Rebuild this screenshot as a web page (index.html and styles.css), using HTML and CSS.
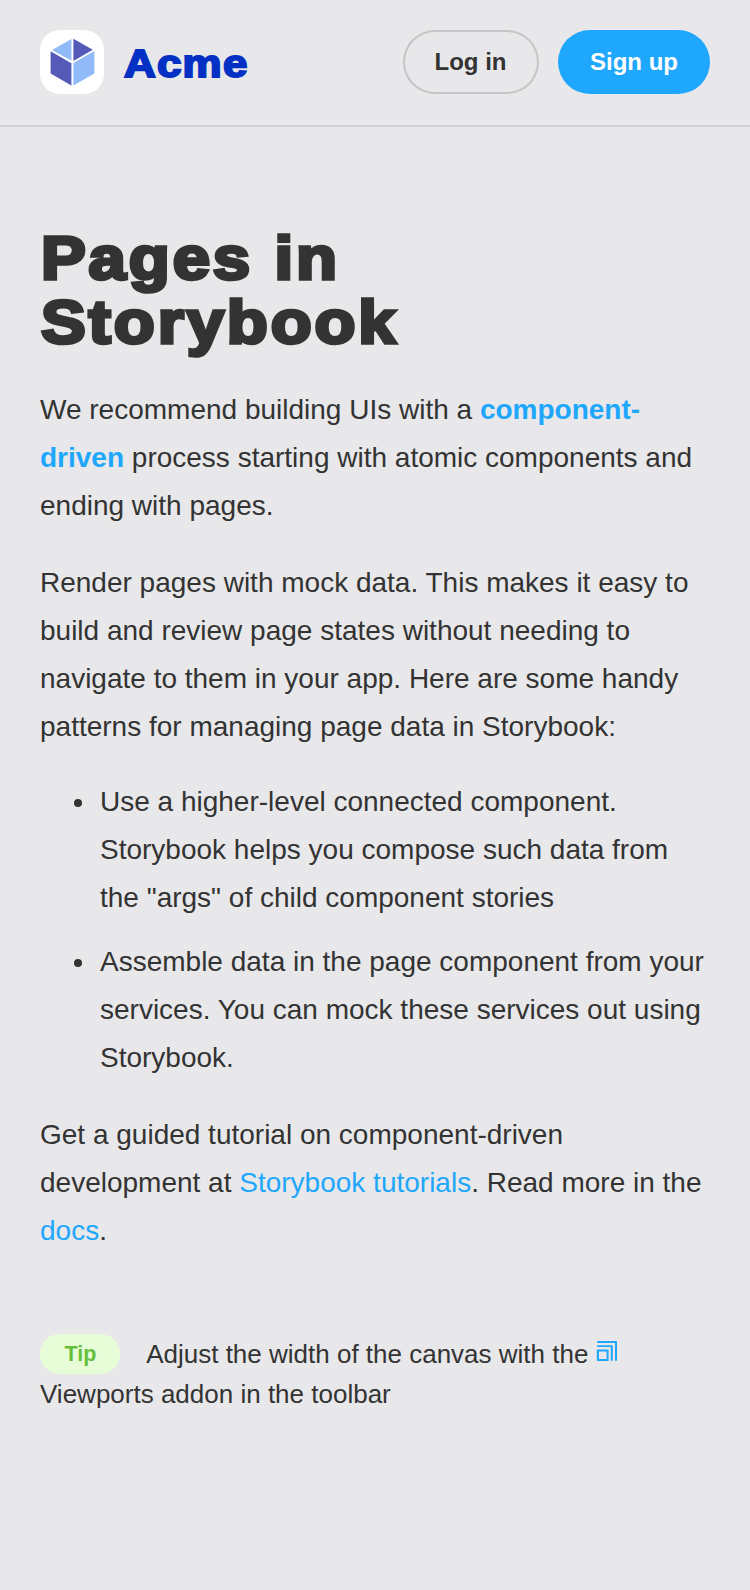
FILE: index.html
```html
<!DOCTYPE html>
<html lang="en">
<head>
<meta charset="utf-8">
<title>Acme</title>
<link rel="stylesheet" href="styles.css">
</head>
<body>
<header class="header">
  <div class="brand">
    <svg class="logo" viewBox="0 0 32 32"><g fill="none" fill-rule="evenodd"><path d="M10 0h12a10 10 0 0110 10v12a10 10 0 01-10 10H10A10 10 0 010 22V10A10 10 0 0110 0z" fill="#FFF"/><path d="M5.3 10.6l10.4 6v11.1l-10.4-6v-11zm11.4-6.2l9.7 5.5-9.7 5.6V4.4z" fill="#555AB9"/><path d="M27.2 10.6v11.2l-10.5 6V16.5l10.5-6zM15.7 4.4v11L6 10l9.7-5.5z" fill="#91BAF8"/></g></svg>
    <span class="brand-name">Acme</span>
  </div>
  <div class="actions">
    <button class="button button-secondary">Log in</button>
    <button class="button button-primary">Sign up</button>
  </div>
</header>
<main class="page">
  <h1 class="title">Pages in Storybook</h1>
  <p class="text">We recommend building UIs with a <a class="link strong">component-driven</a> process starting with atomic components and ending with pages.</p>
  <p class="text">Render pages with mock data. This makes it easy to build and review page states without needing to navigate to them in your app. Here are some handy patterns for managing page data in Storybook:</p>
  <ul class="list">
    <li class="item">Use a higher-level connected component. Storybook helps you compose such data from the "args" of child component stories</li>
    <li class="item">Assemble data in the page component from your services. You can mock these services out using Storybook.</li>
  </ul>
  <p class="text">Get a guided tutorial on component-driven development at <a class="link">Storybook tutorials</a>. Read more in the <a class="link">docs</a>.</p>
  <div class="tip-row"><span class="tip">Tip</span> Adjust the width of the canvas with the <svg class="tip-icon" viewBox="0 0 12 12"><path d="M1.5 5.2h4.8c.3 0 .5.2.5.4v5.1c-.1.2-.3.3-.4.3H1.4a.5.5 0 01-.5-.4V5.7c0-.3.2-.5.5-.5zm0-2.1h6.9c.3 0 .5.2.5.4v7a.5.5 0 01-1 0V4H1.5a.5.5 0 010-1zm0-2.1h9c.3 0 .5.2.5.4v9.1a.5.5 0 01-1 0V2H1.5a.5.5 0 010-1zm4.3 5.2H2V10h3.8V6.2z" fill="#1ea7fd"/></svg> Viewports addon in the toolbar</div>
</main>
</body>
</html>
```
FILE: styles.css
```css
body {
  margin: 0;
  background: #e8e8ea;
  color: #333;
  font-family: "Liberation Sans", Arial, sans-serif;
}
.header {
  display: flex;
  align-items: center;
  justify-content: space-between;
  box-sizing: border-box;
  height: 127px;
  padding: 0 40px 1px;
  border-bottom: 2px solid #d2d2d4;
}
.brand { display: flex; align-items: center; gap: 20px; }
.logo { width: 64px; height: 64px; }
.brand-name {
  padding-top: 3px;
  font: 700 38.5px/42px "Liberation Sans", sans-serif;
  letter-spacing: 1.1px;
  color: #0430c4;
  -webkit-text-stroke: 2px #0430c4;
  transform: scaleX(1.14);
  transform-origin: left;
}
.actions { display: flex; align-items: center; gap: 19.5px; }
.button {
  height: 64px;
  border: 0;
  border-radius: 32px;
  padding: 0 32px;
  font: 700 24px/24px "Liberation Sans", sans-serif;
}
.button-primary { background: #1ea7fd; color: #fff; }
.button-secondary {
  background: transparent;
  color: #333;
  box-shadow: inset 0 0 0 2px #c5c5c7;
}
.page { padding: 99px 40px 0; font-size: 28px; line-height: 48px; }
.title {
  margin: 0 0 0 1px;
  width: 400px;
  font-size: 61px;
  font-weight: 700;
  line-height: 64px;
  letter-spacing: 2.6px;
  -webkit-text-stroke: 3.5px #333;
  transform: scaleX(1.1);
  transform-origin: left;
}
.title + .text { margin-top: 32px; }
.text { margin: 28px 0 29px; }
.link { color: #1ea7fd; }
.strong { font-weight: 700; }
.text + .list { margin-top: -2px; }
.list { margin: 0 0 29px; padding: 0 0 0 60px; list-style: none; }
.item { margin-bottom: 16px; }
.item:last-child { margin-bottom: 0; }
.item::before {
  content: "";
  display: inline-block;
  width: 8px;
  height: 8px;
  margin: 0 18px 0 -26px;
  border-radius: 50%;
  background: #333;
  vertical-align: 4px;
}
.tip-row { margin-top: 79px; font-size: 26px; line-height: 40px; }
.tip {
  display: inline-block;
  margin-right: 20px;
  padding: 0 24px 0 24.5px;
  border-radius: 20px;
  background: #e7fdd8;
  color: #66bf3c;
  font-size: 21.5px;
  font-weight: 700;
  vertical-align: top;
}
.tip-icon { width: 24px; height: 24px; margin-left: -1px; }
```
